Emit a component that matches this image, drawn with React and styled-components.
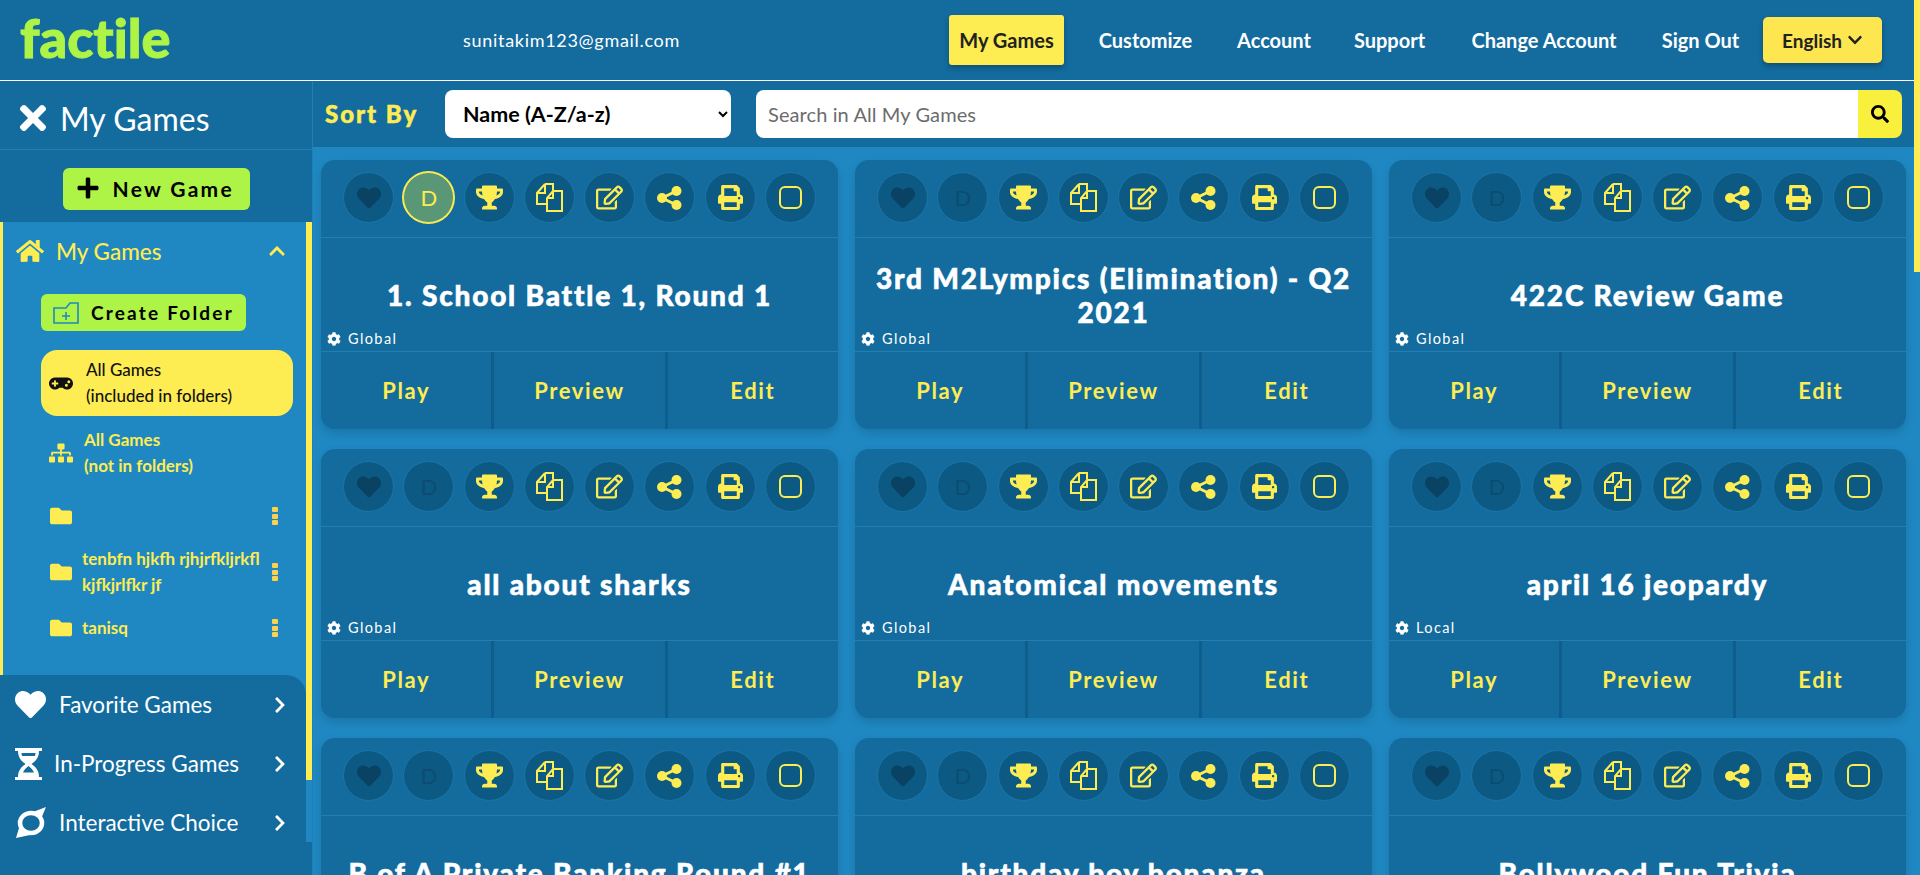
import React from 'react';
import styled, { createGlobalStyle } from 'styled-components';
import {
  FaHeart, FaTrophy, FaRegEdit, FaPrint, FaCog, FaHome, FaGamepad, FaSitemap,
  FaFolder, FaSearch, FaPlus, FaTimes, FaChevronDown, FaChevronUp, FaChevronRight,
} from 'react-icons/fa';

const DARK = '#136b9e';
const BLUE = '#1f88c2';
const LINE = '#1f7fb6';
const CIRCLE = '#0c5a84';
const YELLOW = '#fdec52';
const LIME = '#aef447';
const FONT = 'Lato, "Open Sans", "Liberation Sans", sans-serif';

const GlobalStyle = createGlobalStyle`
  html, body { margin: 0; padding: 0; height: 100%; overflow: hidden; }
  body { font-family: ${FONT}; background: ${BLUE}; }
  * { box-sizing: border-box; }
`;

const Screen = styled.div`
  display: flex;
  width: 1920px;
  height: 875px;
  overflow: hidden;
`;

const Page = styled.div`
  flex: 1;
  min-width: 0;
  display: flex;
  flex-direction: column;
`;

const ScrollRail = styled.div`
  width: 6px;
  background: ${BLUE};
`;

const ScrollThumb = styled.div`
  height: ${p => p.$h}px;
  background: ${YELLOW};
`;

// header

const Header = styled.header`
  height: 81px;
  flex: none;
  display: flex;
  align-items: center;
  background: ${DARK};
  border-bottom: 1px solid #fff;
  padding: 0 32px 0 20px;
`;

const Logo = styled.div`
  width: 443px;
  margin-top: -4px;
  font-size: 54px;
  font-weight: 900;
  line-height: 1;
  font-variant-ligatures: none;
  -webkit-text-stroke: 1px ${LIME};
  color: ${LIME};
`;

const Email = styled.div`
  font-size: 18px;
  color: #fff;
  letter-spacing: 0.7px;
`;

const Nav = styled.nav`
  margin-left: auto;
  display: flex;
  align-items: center;
`;

const NavLink = styled.a`
  display: flex;
  align-items: center;
  height: 50px;
  width: ${p => p.$w}px;
  justify-content: center;
  white-space: nowrap;
  font-size: 20px;
  font-weight: 700;
  color: ${p => (p.$active ? '#222' : '#fff')};
  background: ${p => (p.$active ? YELLOW : 'transparent')};
  margin-right: ${p => p.$gap}px;
  border-radius: 3px;
  box-shadow: ${p => (p.$active ? '0 3px 5px rgba(0,0,0,.25)' : 'none')};
`;

const LangButton = styled.button`
  display: flex;
  align-items: center;
  justify-content: center;
  gap: 5px;
  width: 119px;
  height: 46px;
  border: 0;
  border-radius: 5px;
  font: 700 19px ${FONT};
  color: #222;
  background: #fde650;
  box-shadow: 0 3px 5px rgba(0,0,0,.25);
`;

// layout below header

const Body = styled.div`
  flex: 1;
  min-height: 0;
  display: flex;
`;

const Sidebar = styled.aside`
  width: 312px;
  flex: none;
  background: ${DARK};
`;

const SideTitle = styled.div`
  height: 69px;
  display: flex;
  align-items: center;
  gap: 8px;
  padding: 6px 0 0 14px;
  border-bottom: 1px solid ${LINE};
  font-size: 32px;
  color: #fff;
`;

const NewGameWrap = styled.div`
  height: 72px;
  display: flex;
  justify-content: center;
  padding-top: 18px;
`;

const NewGameButton = styled.button`
  display: flex;
  align-items: center;
  gap: 13px;
  width: 187px;
  height: 42px;
  padding: 0 0 2px 13px;
  border: 0;
  border-radius: 6px;
  background: ${LIME};
  color: #000;
  font: 700 21px ${FONT};
  letter-spacing: 2.3px;
`;

const SideBody = styled.div`
  height: 620px;
  display: flex;
`;

const SideColumn = styled.div`
  width: 306px;
  display: flex;
  flex-direction: column;
  background: ${BLUE};
`;

const SideRail = styled.div`
  width: 6px;
  background: ${BLUE};
`;

const Expanded = styled.div`
  height: 453px;
  flex: none;
  border-left: 3px solid ${YELLOW};
`;

const SectionHead = styled.div`
  height: 60px;
  display: flex;
  align-items: center;
  padding: 0 20px 2px 13px;
  color: ${YELLOW};
  font-size: 22.5px;
  font-weight: 500;
`;

const SectionLabel = styled.span`
  margin-left: 12px;
  flex: 1;
`;

const CreateFolderButton = styled.button`
  display: flex;
  align-items: center;
  gap: 12px;
  width: 205px;
  height: 37px;
  margin: 12px 0 19px 38px;
  padding: 0 0 0 12px;
  border: 0;
  border-radius: 6px;
  background: ${LIME};
  color: #000;
  font: 700 19px ${FONT};
  letter-spacing: 2.2px;
`;

const FolderList = styled.div`
  display: flex;
  flex-direction: column;
  gap: 4px;
  margin-left: 38px;
  width: 252px;
`;

const FolderItem = styled.div`
  display: flex;
  align-items: center;
  min-height: ${p => (p.$tall ? 66 : 52)}px;
  padding-left: 8px;
  border-radius: 16px;
  background: ${p => (p.$active ? YELLOW : 'transparent')};
  color: ${p => (p.$active ? '#111' : YELLOW)};
`;

const FolderIcon = styled.span`
  width: 24px;
  flex: none;
  display: flex;
  justify-content: center;
  font-size: 0;
`;

const FolderText = styled.span`
  flex: 1;
  min-width: 0;
  margin-left: ${p => p.$gap}px;
  font-size: 17px;
  line-height: 26px;
  font-weight: ${p => (p.$active ? 500 : 700)};
`;

const Kebab = styled.span`
  width: 6px;
  flex: none;
  margin: 0 15px 0 6px;
  display: flex;
  flex-direction: column;
  gap: 1.5px;
  i {
    display: block;
    height: 5px;
    background: #fdd04e;
    border-radius: 1px;
  }
`;

const GroupPanel = styled.div`
  height: 167px;
  flex: none;
  background: ${DARK};
  border-top-right-radius: 20px;
`;

const GroupRow = styled.div`
  height: 59px;
  display: flex;
  align-items: center;
  padding-left: ${p => p.$pad}px;
  color: #fff;
  font-size: 22.5px;
`;

const GroupLabel = styled.span`
  flex: 1;
  margin-left: ${p => p.$gap}px;
`;

const GroupChevron = styled(FaChevronRight)`
  margin-right: 17px;
  font-size: 18px;
`;

// main column

const Main = styled.main`
  flex: 1;
  min-width: 0;
  display: flex;
  flex-direction: column;
  border-left: 1px solid ${LINE};
`;

const SortBar = styled.div`
  height: 66px;
  flex: none;
  display: flex;
  align-items: center;
  padding: 0 12px 0 12px;
  background: ${DARK};
`;

const SortLabel = styled.span`
  width: 120px;
  margin-top: -2px;
  font-size: 24px;
  font-weight: 900;
  letter-spacing: 2px;
  -webkit-text-stroke: 0.5px ${YELLOW};
  color: ${YELLOW};
`;

const SortSelect = styled.select`
  width: 286px;
  height: 48px;
  padding-left: 14px;
  border: 0;
  border-radius: 8px;
  background: #fff;
  color: #000;
  font: 700 21.5px ${FONT};
`;

const SearchInput = styled.input`
  flex: 1;
  min-width: 0;
  height: 48px;
  margin-left: 25px;
  padding: 0 12px;
  border: 0;
  border-radius: 8px 0 0 8px;
  font: 400 20px ${FONT};
  letter-spacing: 0.1px;
  background: #fff;
  &::placeholder { color: #6c6c6c; opacity: 1; }
`;

const SearchButton = styled.button`
  width: 44px;
  height: 48px;
  display: flex;
  align-items: center;
  justify-content: center;
  border: 0;
  border-radius: 0 8px 8px 0;
  background: #f9f03e;
  color: #000;
  font-size: 18px;
`;

const CardGrid = styled.div`
  flex: 1;
  min-height: 0;
  overflow: hidden;
  display: grid;
  grid-template-columns: repeat(3, 517px);
  grid-auto-rows: 269px;
  gap: 20px 17px;
  padding: 13px 0 0 8px;
  background: ${BLUE};
`;

const Card = styled.article`
  display: flex;
  flex-direction: column;
  background: ${DARK};
  border-radius: 14px;
  box-shadow: 0 4px 10px rgba(0, 0, 0, 0.14);
`;

const ToolRow = styled.div`
  height: 78px;
  flex: none;
  display: flex;
  align-items: center;
  justify-content: space-between;
  padding: 0 22px 2px;
  border-bottom: 1px solid ${LINE};
`;

const ToolCircle = styled.span`
  width: 51px;
  height: 51px;
  display: flex;
  align-items: center;
  justify-content: center;
  border-radius: 50%;
  border: 1px solid ${p => (p.$lit ? YELLOW : '#1b76a8')};
  background: ${p => (p.$lit ? '#5a9777' : CIRCLE)};
  color: ${YELLOW};
  box-shadow: ${p => (p.$lit ? `0 0 0 1px ${YELLOW}` : 'none')};
`;

const DifficultyMark = styled.span`
  font-size: 22px;
  color: ${p => (p.$lit ? YELLOW : '#0a4c72')};
`;

const CardBody = styled.div`
  flex: 1;
  display: grid;
  padding: 0 10px;
  border-bottom: 1px solid ${LINE};
`;

const CardTitle = styled.h2`
  grid-area: 1 / 1;
  align-self: center;
  margin: 0;
  padding: 0;
  text-align: center;
  color: #fff;
  font-size: 28px;
  line-height: 34px;
  font-weight: 900;
  letter-spacing: 1.8px;
  -webkit-text-stroke: 0.6px #fff;
`;

const Scope = styled.div`
  grid-area: 1 / 1;
  align-self: end;
  margin: 0 0 4px -4px;
  display: flex;
  align-items: center;
  gap: 7px;
  color: #fff;
  font-size: 14.5px;
  letter-spacing: 1.4px;
`;

const CardActions = styled.div`
  height: 77px;
  flex: none;
  display: flex;
`;

const ActionButton = styled.a`
  flex: 1;
  display: flex;
  align-items: center;
  justify-content: center;
  color: ${YELLOW};
  font-size: 22px;
  font-weight: 700;
  letter-spacing: 1.6px;
  & + & { border-left: 3px solid #0d5e8c; }
`;

// drawings with no package icon

const CopiesIcon = () => (
  <svg width="27" height="29" viewBox="0 0 27 29" fill="none" stroke="currentColor" strokeWidth="2">
    <path d="M9 1h8v6M9 1 1 10v11h9M9 1v9H1" />
    <path d="M17 8h9v20H11V15l6-7zM17 8v7h-6" />
  </svg>
);

const ShareIcon = () => (
  <svg width="25" height="24" viewBox="0 0 25 24" fill="currentColor">
    <circle cx="19.500" cy="5" r="5" />
    <circle cx="19.500" cy="19" r="5" />
    <circle cx="5" cy="12" r="5" />
    <path d="M5 12 19.500 5M5 12l14.500 7" stroke="currentColor" strokeWidth="3" />
  </svg>
);

const SquareIcon = () => (
  <svg width="23" height="23" viewBox="0 0 23 23" fill="none" stroke="currentColor" strokeWidth="2">
    <rect x="1" y="1" width="21" height="21" rx="5" />
  </svg>
);

const NewFolderIcon = () => (
  <svg width="26" height="22" viewBox="0 0 26 22" fill="none" stroke="#1f88c2" strokeWidth="1.6">
    <path d="M1 6h12l4-5h8v20H1zM13 10v8M9 14h8" />
  </svg>
);

const HourglassIcon = () => (
  <svg width="27" height="32" viewBox="0 0 27 32">
    <path fill="#fff" d="M0 0h27v3H0zM0 29h27v3H0zM3 3h21c0 6-3 10-7.500 13C21 19 24 23 24 29H3c0-6 3-10 7.500-13C6 13 3 9 3 3z" />
    <path fill={DARK} d="M6.500 5h14c0 1-.2 2-.6 3H7.100c-.4-1-.6-2-.6-3zM13.500 18c2.500 1.800 4.500 4 5.500 6.500H8c1-2.500 3-4.700 5.500-6.500z" />
  </svg>
);

const ChoiceIcon = () => (
  <svg width="31" height="31" viewBox="0 0 31 31">
    <ellipse cx="15" cy="16" rx="11" ry="10" fill="none" stroke="#fff" strokeWidth="4.500" />
    <path fill="#fff" d="M17 5 30 0l-5 12zM3 21 0 31l14-3z" />
  </svg>
);

const tools = [
  <FaTrophy size={27} key="t" />,
  <CopiesIcon key="c" />,
  <FaRegEdit size={27} key="e" />,
  <ShareIcon key="s" />,
  <FaPrint size={25} key="p" />,
  <SquareIcon key="q" />,
];

const games = [
  { title: '1. School Battle 1, Round 1', scope: 'Global', lit: true },
  { title: '3rd M2Lympics (Elimination) - Q2 2021', scope: 'Global' },
  { title: '422C Review Game', scope: 'Global' },
  { title: 'all about sharks', scope: 'Global' },
  { title: 'Anatomical movements', scope: 'Global' },
  { title: 'april 16 jeopardy', scope: 'Local' },
  { title: 'B of A Private Banking Round #1', scope: 'Global' },
  { title: 'birthday boy bonanza', scope: 'Global' },
  { title: 'Bollywood Fun Trivia', scope: 'Global' },
];

function GameCard({ title, scope, lit }) {
  return (
    <Card>
      <ToolRow>
        <ToolCircle><FaHeart size={24} color="#0a4263" /></ToolCircle>
        <ToolCircle $lit={lit}><DifficultyMark $lit={lit}>D</DifficultyMark></ToolCircle>
        {tools.map(icon => <ToolCircle key={icon.key}>{icon}</ToolCircle>)}
      </ToolRow>
      <CardBody>
        <CardTitle>{title}</CardTitle>
        <Scope><FaCog size={14} />{scope}</Scope>
      </CardBody>
      <CardActions>
        <ActionButton>Play</ActionButton>
        <ActionButton>Preview</ActionButton>
        <ActionButton>Edit</ActionButton>
      </CardActions>
    </Card>
  );
}

const Dots = () => <Kebab><i /><i /><i /></Kebab>;

export default function App() {
  return (
    <Screen>
      <GlobalStyle />
      <Page>
        <Header>
          <Logo>factile</Logo>
          <Email>sunitakim123@gmail.com</Email>
          <Nav>
            <NavLink $active $w={115} $gap={34}>My Games</NavLink>
            <NavLink $w={95} $gap={44}>Customize</NavLink>
            <NavLink $w={74} $gap={42}>Account</NavLink>
            <NavLink $w={73} $gap={43}>Support</NavLink>
            <NavLink $w={150} $gap={42}>Change Account</NavLink>
            <NavLink $w={79} $gap={23}>Sign Out</NavLink>
            <LangButton>English <FaChevronDown size={16} /></LangButton>
          </Nav>
        </Header>
        <Body>
          <Sidebar>
            <SideTitle><FaTimes size={38} />My Games</SideTitle>
            <NewGameWrap>
              <NewGameButton><FaPlus size={24} />New Game</NewGameButton>
            </NewGameWrap>
            <SideBody>
              <SideColumn>
                <Expanded>
                  <SectionHead>
                    <FaHome size={28} />
                    <SectionLabel>My Games</SectionLabel>
                    <FaChevronUp size={18} />
                  </SectionHead>
                  <CreateFolderButton><NewFolderIcon />Create Folder</CreateFolderButton>
                  <FolderList>
                    <FolderItem $active $tall>
                      <FolderIcon><FaGamepad size={25} /></FolderIcon>
                      <FolderText $active $gap={13}>All Games<br />(included in folders)</FolderText>
                    </FolderItem>
                    <FolderItem $tall>
                      <FolderIcon><FaSitemap size={24} /></FolderIcon>
                      <FolderText $gap={11}>All Games<br />(not in folders)</FolderText>
                    </FolderItem>
                    <FolderItem>
                      <FolderIcon><FaFolder size={22} /></FolderIcon>
                      <FolderText $gap={9} />
                      <Dots />
                    </FolderItem>
                    <FolderItem>
                      <FolderIcon><FaFolder size={22} /></FolderIcon>
                      <FolderText $gap={9}>tenbfn hjkfh rjhjrfkljrkfl kjfkjrlfkr jf</FolderText>
                      <Dots />
                    </FolderItem>
                    <FolderItem>
                      <FolderIcon><FaFolder size={22} /></FolderIcon>
                      <FolderText $gap={9}>tanisq</FolderText>
                      <Dots />
                    </FolderItem>
                  </FolderList>
                </Expanded>
                <GroupPanel>
                  <GroupRow $pad={15}>
                    <FaHeart size={31} />
                    <GroupLabel $gap={13}>Favorite Games</GroupLabel>
                    <GroupChevron />
                  </GroupRow>
                  <GroupRow $pad={15}>
                    <HourglassIcon />
                    <GroupLabel $gap={12}>In-Progress Games</GroupLabel>
                    <GroupChevron />
                  </GroupRow>
                  <GroupRow $pad={16}>
                    <ChoiceIcon />
                    <GroupLabel $gap={12}>Interactive Choice</GroupLabel>
                    <GroupChevron />
                  </GroupRow>
                </GroupPanel>
              </SideColumn>
              <SideRail><ScrollThumb $h={558} /></SideRail>
            </SideBody>
          </Sidebar>
          <Main>
            <SortBar>
              <SortLabel>Sort By</SortLabel>
              <SortSelect defaultValue="name">
                <option value="name">Name (A-Z/a-z)</option>
                <option value="date">Date</option>
              </SortSelect>
              <SearchInput placeholder="Search in All My Games" />
              <SearchButton aria-label="Search"><FaSearch /></SearchButton>
            </SortBar>
            <CardGrid>
              {games.map(game => <GameCard key={game.title} {...game} />)}
            </CardGrid>
          </Main>
        </Body>
      </Page>
      <ScrollRail><ScrollThumb $h={272} /></ScrollRail>
    </Screen>
  );
}
